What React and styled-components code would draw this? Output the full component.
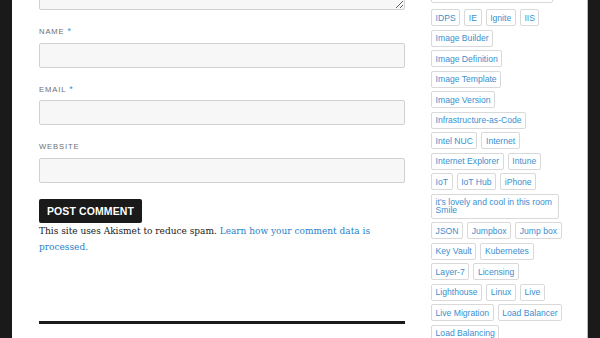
import React from "react";
import styled, { createGlobalStyle } from "styled-components";

const Global = createGlobalStyle`
  html, body { margin: 0; padding: 0; background: #ffffff; }
  #root { height: 338px; overflow: hidden; }
`;

const Page = styled.div`
  display: flex;
  height: 338px;
  overflow: hidden;
  background: #ffffff;
`;

const Frame = styled.div`
  flex: 0 0 ${(p) => p.$w}px;
  background: #1a1a1a;
  border-left: ${(p) => (p.$edge ? "1px solid #b8b8b8" : "none")};
  box-sizing: border-box;
`;

const Content = styled.div`
  flex: 1;
  display: flex;
  align-items: flex-start;
  padding-left: 27px;
  column-gap: 26px;
`;

const Main = styled.div`
  flex: 0 0 366px;
  display: flex;
  flex-direction: column;
  margin-top: -30px;
`;

const TextArea = styled.textarea`
  display: block;
  box-sizing: border-box;
  width: 100%;
  height: 40px;
  margin: 0;
  background: #f7f7f7;
  border: 1px solid #d1d1d1;
  border-radius: 2px;
  resize: vertical;
  outline: none;
`;

const Field = styled.div`
  display: flex;
  flex-direction: column;
  margin-top: 16px;
`;

const Label = styled.label`
  display: block;
  height: 12px;
  font-family: "Liberation Sans", Arial, sans-serif;
  font-size: 7.6px;
  line-height: 12px;
  letter-spacing: 0.9px;
  text-transform: uppercase;
  color: #6e6e6e;
  margin-bottom: 4.5px;
`;

const Req = styled.span`
  color: #3a94d4;
  font-size: 9px;
  line-height: 0;
  margin-left: 3px;
`;

const Input = styled.input`
  display: block;
  box-sizing: border-box;
  width: 100%;
  height: 25px;
  margin: 0;
  background: #f7f7f7;
  border: 1px solid #d1d1d1;
  border-radius: 2px;
  outline: none;
`;

const Submit = styled.button`
  align-self: flex-start;
  margin-top: 16.5px;
  height: 24px;
  padding: 0 8px;
  border: none;
  border-radius: 2px;
  background: #1a1a1a;
  color: #ffffff;
  font-family: "Liberation Sans", Arial, sans-serif;
  font-weight: 700;
  font-size: 10.5px;
  letter-spacing: 0.1px;
  text-transform: uppercase;
  cursor: pointer;
`;

const Note = styled.p`
  margin: 0;
  font-family: "DejaVu Serif", Georgia, serif;
  font-stretch: condensed;
  font-size: 10px;
  line-height: 16px;
  color: #1a1a1a;
`;

const Link = styled.a`
  color: #1f82c9;
  text-decoration: none;
`;

const Rule = styled.div`
  margin-top: 66px;
  height: 3px;
  background: #1a1a1a;
`;

const Sidebar = styled.div`
  flex: 0 0 131px;
  display: flex;
  flex-direction: column;
  row-gap: 3.5px;
  margin-top: -14px;
`;

const TagRow = styled.div`
  display: flex;
  column-gap: 4px;
  margin-bottom: ${(p) => (p.$lead ? "2.5px" : "0")};
`;

const Tag = styled.a`
  display: block;
  box-sizing: border-box;
  padding: 3.5px 3.6px;
  border: 1px solid #d9d9d9;
  border-radius: 2px;
  font-family: "Liberation Sans", Arial, sans-serif;
  font-size: 8.6px;
  line-height: 8px;
  color: #3a8fcf;
  text-decoration: none;
  white-space: ${(p) => (p.$wrap ? "normal" : "nowrap")};
  width: ${(p) => (p.$w ? `${p.$w}px` : "auto")};
`;

const rows = [
  ["IDPS", "IE", "Ignite", "IIS"],
  ["Image Builder"],
  ["Image Definition"],
  ["Image Template"],
  ["Image Version"],
  ["Infrastructure-as-Code"],
  ["Intel NUC", "Internet"],
  ["Internet Explorer", "Intune"],
  ["IoT", "IoT Hub", "iPhone"],
  ["it's lovely and cool in this room Smile"],
  ["JSON", "Jumpbox", "Jump box"],
  ["Key Vault", "Kubernetes"],
  ["Layer-7", "Licensing"],
  ["Lighthouse", "Linux", "Live"],
  ["Live Migration", "Load Balancer"],
  ["Load Balancing"],
];

export default function App() {
  return (
    <>
      <Global />
      <Page>
        <Frame $w={12} />
        <Content>
          <Main>
            <TextArea aria-label="Comment" />
            <Field>
              <Label>
                Name<Req>*</Req>
              </Label>
              <Input type="text" />
            </Field>
            <Field>
              <Label>
                Email<Req>*</Req>
              </Label>
              <Input type="email" />
            </Field>
            <Field>
              <Label>Website</Label>
              <Input type="url" />
            </Field>
            <Submit>Post Comment</Submit>
            <Note>
              This site uses Akismet to reduce spam.{" "}
              <Link href="#">Learn how your comment data is processed.</Link>
            </Note>
            <Rule />
          </Main>
          <Sidebar>
            <TagRow $lead>
              <Tag href="#" $w={122}>Hybrid Identity (Entra)</Tag>
            </TagRow>
            {rows.map((row, i) => (
              <TagRow key={i}>
                {row.map((t) => {
                  const long = t.length > 30;
                  return (
                    <Tag href="#" key={t} $wrap={long} $w={long ? 128 : 0}>
                      {t}
                    </Tag>
                  );
                })}
              </TagRow>
            ))}
          </Sidebar>
        </Content>
        <Frame $w={13} $edge />
      </Page>
    </>
  );
}
